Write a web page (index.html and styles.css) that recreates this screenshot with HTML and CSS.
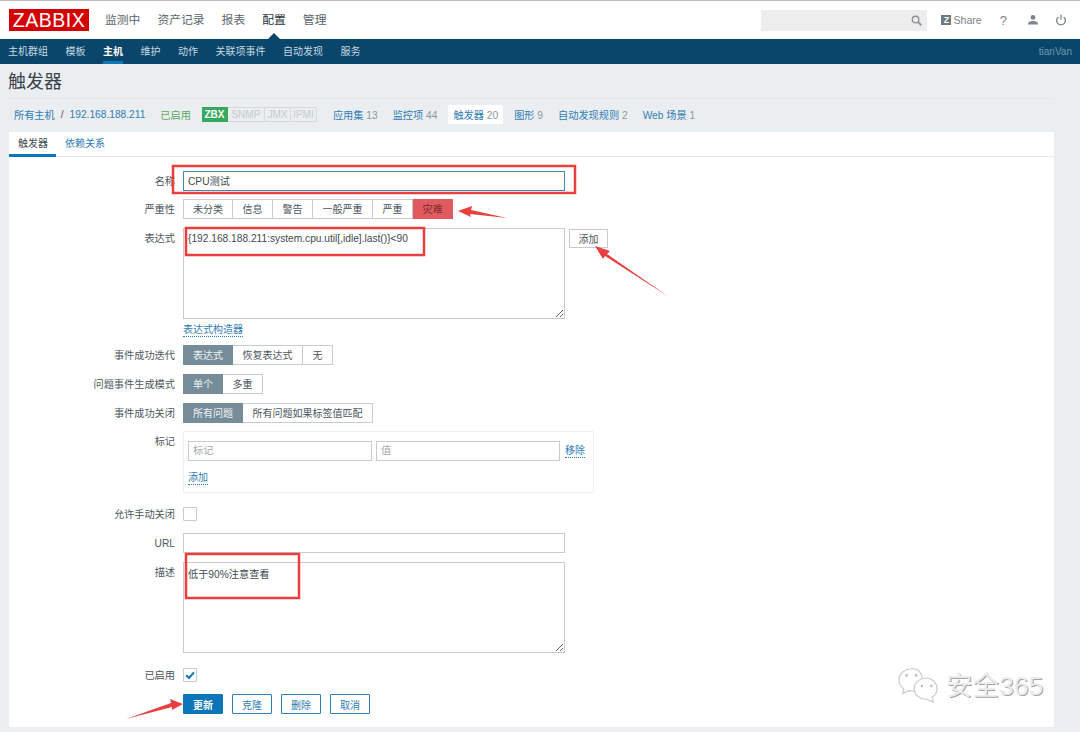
FILE: index.html
```html
<!DOCTYPE html>
<html lang="zh">
<head>
<meta charset="utf-8">
<title>触发器</title>
<link rel="stylesheet" href="styles.css">
</head>
<body>
<header class="topbar">
  <div class="logo">ZABBIX</div>
  <nav class="mainnav">
    <a>监测中</a><a>资产记录</a><a>报表</a><a class="on">配置</a><a>管理</a>
  </nav>
  <div class="tools">
    <div class="search">
      <svg class="ico" viewBox="0 0 12 12" width="11" height="11"><circle cx="5" cy="5" r="3.6" fill="none" stroke="#8a9296" stroke-width="1.5"/><path d="M7.8 7.8 11.2 11.2" stroke="#8a9296" stroke-width="2"/></svg>
    </div>
    <div class="share"><span class="zbox">Z</span>Share</div>
    <div class="help">?</div>
    <svg class="ico user" viewBox="0 0 12 12" width="12" height="12"><circle cx="6" cy="3.4" r="2.4" fill="#7b858b"/><path d="M1 10.5c0-2.6 2.4-3.4 5-3.4s5 .8 5 3.4z" fill="#7b858b"/></svg>
    <svg class="ico power" viewBox="0 0 12 12" width="12" height="12"><path d="M3.4 2.9a4.4 4.4 0 1 0 5.2 0" fill="none" stroke="#7b858b" stroke-width="1.3"/><path d="M6 .8v5" stroke="#7b858b" stroke-width="1.3"/></svg>
  </div>
</header>
<nav class="subnav">
  <a>主机群组</a><a>模板</a><a class="on">主机</a><a>维护</a><a>动作</a><a>关联项事件</a><a>自动发现</a><a>服务</a>
  <span class="who">tianVan</span>
</nav>
<h1 class="title">触发器</h1>
<div class="crumbs">
  <a class="c1">所有主机</a><span class="sep">/</span><a class="c2">192.168.188.211</a>
  <span class="enabled">已启用</span>
  <span class="tags"><b class="zbx">ZBX</b><i class="t-snmp">SNMP</i><i class="t-jmx">JMX</i><i class="t-ipmi">IPMI</i></span>
  <a class="item">应用集 <em>13</em></a>
  <a class="item">监控项 <em>44</em></a>
  <a class="item cur">触发器 <em>20</em></a>
  <a class="item">图形 <em>9</em></a>
  <a class="item">自动发现规则 <em>2</em></a>
  <a class="item">Web 场景 <em>1</em></a>
</div>
<main class="panel">
  <div class="tabs"><a class="on">触发器</a><a>依赖关系</a></div>
  <form class="form">
    <div class="row m8"><label>名称</label><input class="field focus" value="CPU测试"></div>
    <div class="row m9"><label>严重性</label>
      <div class="seg"><span>未分类</span><span>信息</span><span>警告</span><span>一般严重</span><span>严重</span><span class="dis">灾难</span></div>
    </div>
    <div class="row m2"><label>表达式</label><textarea class="area expr">{192.168.188.211:system.cpu.util[,idle].last()}&lt;90</textarea><button type="button" class="add">添加</button></div>
    <div class="row m8 link-row"><label></label><a class="dot">表达式构造器</a></div>
    <div class="row m9"><label>事件成功迭代</label><div class="seg"><span class="act">表达式</span><span>恢复表达式</span><span>无</span></div></div>
    <div class="row m9"><label>问题事件生成模式</label><div class="seg"><span class="act">单个</span><span>多重</span></div></div>
    <div class="row m8"><label>事件成功关闭</label><div class="seg"><span class="act">所有问题</span><span>所有问题如果标签值匹配</span></div></div>
    <div class="row m14"><label>标记</label>
      <div class="tagbox">
        <div class="tagline"><input class="field small" placeholder="标记"><input class="field small" placeholder="值"><a class="dot">移除</a></div>
        <a class="dot">添加</a>
      </div>
    </div>
    <div class="row m12 chk-row"><label>允许手动关闭</label><span class="check"></span></div>
    <div class="row m9"><label>URL</label><input class="field"></div>
    <div class="row m15"><label>描述</label><textarea class="area desc">低于90%注意查看</textarea></div>
    <div class="row m12 chk-row"><label>已启用</label><span class="check"><svg viewBox="0 0 14 14" width="14" height="14"><path d="M3.2 7.2 6 10l5-5.6" fill="none" stroke="#0b76b7" stroke-width="2"/></svg></span></div>
    <div class="row btns"><label></label><button type="button" class="primary">更新</button><button type="button" class="ghost">克隆</button><button type="button" class="ghost">删除</button><button type="button" class="ghost">取消</button></div>
  </form>
</main>
<svg class="marks" viewBox="0 0 1080 732" width="1080" height="732" aria-hidden="true">
  <g fill="none" stroke="#ea3f3f" stroke-width="2.5">
    <rect x="173" y="166" width="402" height="27"/>
    <rect x="186" y="228" width="238" height="27"/>
    <rect x="186" y="554" width="113" height="44"/>
  </g>
  <g fill="#ea3f3f">
    <path d="M458 211 472 206 471 210 507 218 470 214 471 217z"/>
    <path d="M595 246 610 251 607 254 669 297 605 256 603 259z"/>
    <path d="M183 704 170 699 171 703 126 719 172 707 172 710z"/>
  </g>
</svg>
<div class="mark">
  <svg viewBox="0 0 46 40" width="44" height="38"><g fill="#fff" stroke="#c9c9c9" stroke-width="1.2"><path d="M16 4C8 4 2 9 2 16c0 4 2 7 5 9l-1 5 6-3c2 .5 4 .5 6 .3C29 24 30 4 16 4z"/><path d="M31 14c-8 0-13 5-13 11s5 11 13 11l7 3-1-5c3-2 5-5 5-9 0-6-5-11-11-11z"/></g><g fill="#bcbcbc"><circle cx="10" cy="11" r="1.4"/><circle cx="20" cy="11" r="1.4"/><circle cx="26" cy="22" r="1.3"/><circle cx="36" cy="22" r="1.3"/></g></svg>
  <span>安全365</span>
</div>
</body>
</html>
```
FILE: styles.css
```css
* { box-sizing: border-box; }
html, body { margin: 0; height: 732px; overflow: hidden; }
body {
  position: relative;
  background: #ebeef0;
  color: #3f4a50;
  font-family: "Liberation Sans", "Noto Sans CJK SC", sans-serif;
  font-size: 10.2px;
}
a { color: #2f7db3; text-decoration: none; }

.topbar {
  display: flex;
  align-items: center;
  height: 39px;
  padding: 0 13px 0 9px;
  background: #fff;
  border-top: 1px solid #bcbcbc;
}
.logo {
  width: 80px;
  height: 22px;
  margin-right: 16px;
  background: #d40000;
  color: #fff;
  font-size: 19.5px;
  line-height: 22px;
  text-align: center;
  letter-spacing: .5px;
}
.mainnav { display: flex; gap: 17px; font-size: 11.8px; }
.mainnav a { position: relative; color: #5c666c; line-height: 38px; }
.mainnav a.on { color: #2b3338; }
.mainnav a.on::after {
  content: "";
  position: absolute;
  left: 50%;
  bottom: 0;
  margin-left: -6px;
  border: 6px solid transparent;
  border-top-width: 0;
  border-bottom-color: #0a466a;
}
.tools { display: flex; align-items: center; margin-left: auto; color: #7b858b; }
.search {
  display: flex;
  align-items: center;
  justify-content: flex-end;
  width: 166px;
  height: 21px;
  padding-right: 5px;
  background: #ededed;
}
.share { display: flex; align-items: center; margin-left: 14px; font-size: 10.6px; }
.zbox {
  width: 10px;
  height: 10px;
  margin-right: 2px;
  background: #6d7a81;
  color: #fff;
  font-size: 9px;
  font-weight: 700;
  line-height: 10px;
  text-align: center;
}
.help { margin-left: 18px; font-size: 13px; }
.user { margin-left: 20px; }
.power { margin-left: 16px; }

.subnav {
  display: flex;
  gap: 17.5px;
  height: 25px;
  padding: 0 8px;
  background: #0a466a;
  font-size: 10px;
  line-height: 25px;
}
.subnav a { color: #c6d8e3; }
.subnav a.on { color: #fff; font-weight: 700; border-bottom: 3px solid #0d79bb; }
.who { margin-left: auto; color: #6f9ab4; font-size: 10px; }

.title {
  height: 35px;
  margin: 0 26px 0 8px;
  border-bottom: 1px solid #e4e7e9;
  color: #39434a;
  font-size: 18px;
  font-weight: 400;
  line-height: 37px;
}
.crumbs {
  display: flex;
  align-items: center;
  height: 33px;
  padding: 0 0 3px 14px;
  color: #8c979d;
}
.sep { margin: 0 6px; color: #555; }
.enabled { margin: 0 11px 0 15px; color: #5aa95f; }
.tags { display: flex; height: 15px; margin-right: 16px; line-height: 13px; font-size: 10px; text-align: center; }
.tags b, .tags i {
  border: 1px solid #d6dadc;
  border-left-width: 0;
  color: #c4cacd;
  font-style: normal;
  font-weight: 400;
}
.tags .zbx { width: 26px; background: #35a95e; border-color: #35a95e; color: #fff; font-weight: 700; }
.t-snmp { width: 37px; }
.t-jmx { width: 26px; }
.t-ipmi { width: 26px; }
.item { margin-right: 15px; }
.item em { color: #8c979d; font-style: normal; }
.item.cur { margin: 0 11px 0 -4px; padding: 2px 5px; background: #fff; }

.panel {
  width: 1045px;
  margin-left: 9px;
  padding-bottom: 13px;
  background: #fff;
}
.tabs { display: flex; height: 25px; border-bottom: 1px solid #e6e9eb; font-size: 10px; line-height: 24px; }
.tabs a { flex: none; padding: 0 9px; height: 25px; }
.tabs a.on { width: 47px; white-space: nowrap; color: #3f4a50; border-bottom: 3px solid #0b76b7; }

.form { padding-top: 14px; }
.row { display: flex; align-items: flex-start; }
.row > label {
  flex: none;
  width: 166px;
  height: 20px;
  margin-right: 8px;
  color: #4d575d;
  line-height: 21px;
  text-align: right;
}
.m2 { margin-bottom: 2px; }
.m8 { margin-bottom: 8px; }
.m9 { margin-bottom: 9px; }
.m12 { margin-bottom: 12px; }
.m14 { margin-bottom: 14px; }
.m15 { margin-bottom: 15px; }

.field, .area {
  display: block;
  margin: 0;
  padding: 0 4px;
  border: 1px solid #c5cbce;
  border-radius: 0;
  background: #fff;
  color: #3f4a50;
  font: inherit;
  outline: 0;
}
.field { width: 382px; height: 20px; }
.field.focus { border-color: #3f88b6; padding-bottom: 2px; }
.field.small { width: 184px; padding-bottom: 2px; }
.field::placeholder { color: #a2aaae; }
.area { width: 382px; height: 91px; padding-top: 3px; line-height: 14px; }
.area.desc { padding-top: 5px; }

.seg { display: flex; height: 20px; font-size: 10px; line-height: 19px; }
.seg span {
  padding: 0 9.5px;
  border: 1px solid #c5cbce;
  border-left-width: 0;
  background: #fff;
  color: #4d575d;
}
.seg span:first-child { padding: 0 9px; border-left-width: 1px; }
.seg .act { background: #768d99; border-color: #768d99; color: #f0f3f5; }
.seg .dis { background: #e05a5f; border-color: #e05a5f; color: #7a2a2e; }

.add {
  width: 39px;
  height: 19px;
  margin: 1px 0 0 4px;
  padding: 0;
  border: 1px solid #c5cbce;
  background: #fff;
  color: #4d575d;
  font: inherit;
  font-size: 10px;
}
.link-row { height: 16px; align-items: center; }
.link-row .dot { margin-top: 2px; }
.dot { border-bottom: 1px dotted #2f7db3; font-size: 10px; line-height: 12px; }

.tagbox {
  width: 411px;
  height: 62px;
  padding: 9px 4px 0;
  border: 1px solid #eef0f1;
}
.tagline { display: flex; align-items: center; gap: 4px; margin-bottom: 11px; }
.tagline .dot { margin-left: 1px; }
.tagbox > .dot { display: inline-block; }

.chk-row { height: 14px; align-items: center; }
.chk-row > label { height: 14px; line-height: 16px; }
.check {
  display: block;
  width: 14px;
  height: 14px;
  border: 1px solid #c5cbce;
  border-radius: 1px;
  background: #fff;
}
.check svg { display: block; margin: -1px; }

.btns { gap: 9px; }
.btns > label { margin-right: -1px; }
.btns button { width: 40px; height: 20px; padding: 0; font: inherit; font-size: 10px; border-radius: 1px; }
.primary { background: #0b76b7; border: 1px solid #0b76b7; color: #fff; font-weight: 700 !important; }
.ghost { background: #fff; border: 1px solid #2f7db3; color: #2f7db3; }

.marks { position: absolute; left: 0; top: 0; pointer-events: none; }
.mark {
  position: absolute;
  left: 897px;
  top: 664px;
  display: flex;
  align-items: center;
  gap: 5px;
  color: #ececec;
  font-size: 26.5px;
  text-shadow: 1px 1px 0 #a5a5a5;
}
```
